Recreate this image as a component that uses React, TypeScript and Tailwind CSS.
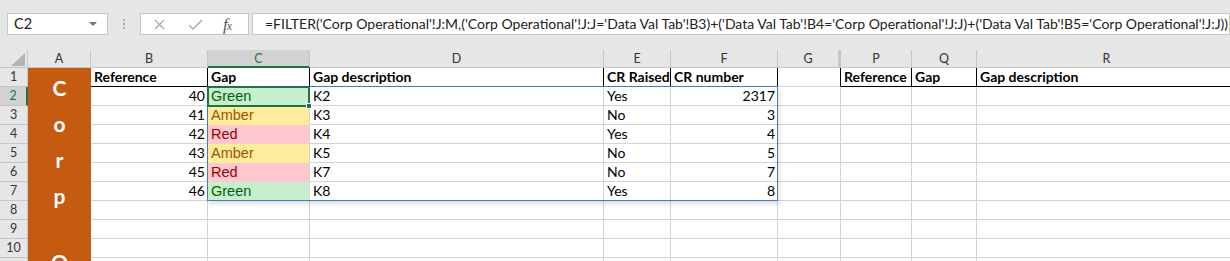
import React from 'react';

type Col = { key: string; w: number };

const cols: Col[] = [
  { key: 'B', w: 117 },
  { key: 'C', w: 102 },
  { key: 'D', w: 294 },
  { key: 'E', w: 67 },
  { key: 'F', w: 107 },
  { key: 'G', w: 63 },
  { key: 'P', w: 71 },
  { key: 'Q', w: 65 },
  { key: 'R', w: 260 },
];

const headerRow: Record<string, string> = {
  B: 'Reference',
  C: 'Gap',
  D: 'Gap description',
  E: 'CR Raised',
  F: 'CR number',
  P: 'Reference',
  Q: 'Gap',
  R: 'Gap description',
};

type Gap = 'Green' | 'Amber' | 'Red';

const data: { ref: number; gap: Gap; desc: string; raised: string; num: number }[] = [
  { ref: 40, gap: 'Green', desc: 'K2', raised: 'Yes', num: 2317 },
  { ref: 41, gap: 'Amber', desc: 'K3', raised: 'No', num: 3 },
  { ref: 42, gap: 'Red', desc: 'K4', raised: 'Yes', num: 4 },
  { ref: 43, gap: 'Amber', desc: 'K5', raised: 'No', num: 5 },
  { ref: 45, gap: 'Red', desc: 'K7', raised: 'No', num: 7 },
  { ref: 46, gap: 'Green', desc: 'K8', raised: 'Yes', num: 8 },
];

const gapStyle: Record<Gap, string> = {
  Green: 'bg-[#c6efce] text-[#006100] border-b-[#c6efce]',
  Amber: 'bg-[#ffeb9c] text-[#9c5700] border-b-[#ffeb9c]',
  Red: 'bg-[#ffc7ce] text-[#9c0006] border-b-[#ffc7ce]',
};

const formula =
  "=FILTER('Corp Operational'!J:M,('Corp Operational'!J:J='Data Val Tab'!B3)+('Data Val Tab'!B4='Corp Operational'!J:J)+('Data Val Tab'!B5='Corp Operational'!J:J))";

function FormulaBar() {
  return (
    <div className="h-[50px] bg-[#e6e6e6] border-t-[3px] border-t-[#e6e6e6] flex items-start pt-[10px] pl-[7px]">
      {/* Name box */}
      <div className="w-[101px] h-[22px] bg-white border border-[#c6c6c6] flex items-center justify-between pl-[6px] pr-[10px]">
        <span className="text-[14.5px] text-[#222] leading-none">C2</span>
        <span className="w-0 h-0 border-l-[4px] border-r-[4px] border-t-[4px] border-l-transparent border-r-transparent border-t-[#777]" />
      </div>
      {/* grip dots */}
      <div className="w-[32px] h-[22px] flex flex-col items-center justify-center gap-[2px]">
        <span className="w-[2px] h-[2px] bg-[#a6a6a6]" />
        <span className="w-[2px] h-[2px] bg-[#a6a6a6]" />
        <span className="w-[2px] h-[2px] bg-[#a6a6a6]" />
      </div>
      {/* cancel / enter / fx */}
      <div className="w-[109px] h-[22px] bg-white border border-[#c6c6c6] flex items-center pl-[13px]">
        <svg width="11" height="11" viewBox="0 0 11 11" className="mr-[23px]">
          <path d="M1 1L10 10M10 1L1 10" stroke="#a6a6a6" strokeWidth="1.2" />
        </svg>
        <svg width="15" height="11" viewBox="0 0 15 11" className="mr-[20px]">
          <path d="M1 6L5 10L14 1" stroke="#b0b0b0" strokeWidth="1.6" fill="none" />
        </svg>
        <span className="font-['Liberation_Serif',serif] italic text-[17px] text-[#555] leading-none tracking-[-1px]">
          f<span className="text-[12px]">x</span>
        </span>
      </div>
      {/* formula input */}
      <div className="ml-[3px] flex-1 h-[22px] bg-white border border-[#c6c6c6] flex items-center pl-[12px] overflow-hidden">
        <span className="whitespace-nowrap text-[14px] text-[#222] leading-none">{formula}</span>
      </div>
    </div>
  );
}

function ColumnHeaders() {
  return (
    <div className="flex h-[18px] bg-[#e6e6e6]">
      <div className="w-[28px] shrink-0 border-r border-b border-[#c6c6c6] relative">
        <svg width="14" height="13" viewBox="0 0 14 13" className="absolute left-[11px] top-[3px]">
          <path d="M14 0V13H0Z" fill="#b4b4b4" />
        </svg>
      </div>
      <div className="w-[63px] shrink-0 border-r border-b border-[#c6c6c6] text-center text-[12.5px] text-[#333] leading-[17px]">
        A
      </div>
      {cols.map((c) => {
        const sel = c.key === 'C';
        return (
          <div
            key={c.key}
            style={{ width: c.w }}
            className={`shrink-0 text-center text-[12.5px] leading-[17px] border-r ${
              sel
                ? 'bg-[#d2d2d2] text-[#217346] border-b-2 border-b-[#217346] border-r-[#c6c6c6]'
                : 'text-[#333] border-b border-[#c6c6c6]'
            } ${c.key === 'G' ? 'border-r-[3px] border-r-[#c6c6c6]' : ''}`}
          >
            {c.key}
          </div>
        );
      })}
    </div>
  );
}

function Cell({
  w,
  children,
  className = '',
}: {
  w: number;
  children?: React.ReactNode;
  className?: string;
}) {
  return (
    <div
      style={{ width: w }}
      className={`shrink-0 h-[19px] border-r border-b border-[#d4d4d4] px-[3px] leading-[18px] whitespace-nowrap overflow-hidden ${className}`}
    >
      {children}
    </div>
  );
}

export default function App() {
  const rowNums = [1, 2, 3, 4, 5, 6, 7, 8, 9, 10, 11];
  return (
    <div className="w-[1230px] h-[261px] overflow-hidden bg-white font-['Lato',sans-serif] text-[14px] text-black">
      <FormulaBar />
      <ColumnHeaders />
      <div className="flex">
        {/* Row headers */}
        <div className="w-[28px] shrink-0 flex flex-col bg-[#e6e6e6]">
          {rowNums.map((n) => (
            <div
              key={n}
              className={`h-[19px] text-center text-[12.5px] leading-[18px] border-b border-[#c6c6c6] ${
                n === 2
                  ? 'bg-[#d2d2d2] text-[#217346] border-r-2 border-r-[#217346]'
                  : 'text-[#333] border-r border-r-[#c6c6c6]'
              }`}
            >
              {n}
            </div>
          ))}
        </div>

        {/* Column A merged, vertical title */}
        <div className="w-[63px] shrink-0 h-[209px] bg-[#c55a11] flex flex-col items-center pt-[2px] text-white font-bold text-[21px] leading-[36px]">
          <span>C</span>
          <span>o</span>
          <span>r</span>
          <span>p</span>
          <span className="mt-[30px]">O</span>
        </div>

        {/* Cells */}
        <div className="flex flex-col">
          {/* Row 1 */}
          <div className="flex">
            {cols.map((c) => (
              <Cell
                key={c.key}
                w={c.w}
                className={`font-bold ${c.key === 'G' ? 'border-r-black' : 'border-b-black border-r-black'}`}
              >
                {headerRow[c.key]}
              </Cell>
            ))}
          </div>

          {/* Spill range rows 2-7 */}
          <div className="relative flex flex-col">
            {data.map((r, i) => (
              <div key={i} className="flex">
                <Cell w={117} className="text-right pr-[2px]">
                  {r.ref}
                </Cell>
                <Cell
                  w={102}
                  className={`font-['Liberation_Sans',sans-serif] text-[14.5px] relative overflow-visible ${gapStyle[r.gap]}`}
                >
                  {r.gap}
                  {i === 0 && (
                    <div className="absolute left-[-1px] top-[-1px] w-[103px] h-[21px] border-2 border-[#217346] z-20">
                      <div className="absolute right-[-4px] bottom-[-4px] w-[6px] h-[6px] bg-[#217346] border border-white" />
                    </div>
                  )}
                </Cell>
                <Cell w={294}>{r.desc}</Cell>
                <Cell w={67}>{r.raised}</Cell>
                <Cell w={107} className="text-right pr-[2px]">
                  {r.num}
                </Cell>
                <Cell w={63} />
                <Cell w={71} />
                <Cell w={65} />
                <Cell w={260} />
              </div>
            ))}
            {/* spill range border */}
            <div className="absolute left-[116px] top-[-1px] w-[571px] h-[115px] border border-[#4a78c2] shadow-[2px_3px_4px_rgba(0,0,0,0.12)] pointer-events-none z-10" />
          </div>

          {/* Empty rows 8-11 */}
          {[8, 9, 10, 11].map((n) => (
            <div key={n} className="flex">
              {cols.map((c) => (
                <Cell key={c.key} w={c.w} />
              ))}
            </div>
          ))}
        </div>
      </div>
    </div>
  );
}
